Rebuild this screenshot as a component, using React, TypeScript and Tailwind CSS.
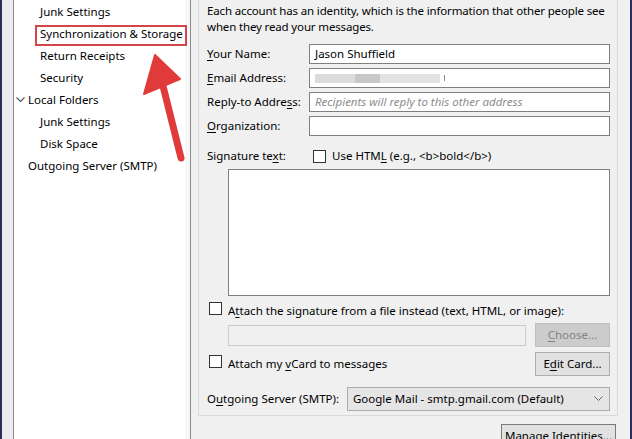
import React from "react";

const U = ({ children }: { children: React.ReactNode }) => (
  <span className="underline underline-offset-2">{children}</span>
);

const Checkbox = () => (
  <span className="inline-block w-[13px] h-[13px] border border-[#333333] bg-white shrink-0" />
);

function SideItem({ children, indent, chevron }: { children: React.ReactNode; indent?: boolean; chevron?: boolean }) {
  return (
    <div className={`relative h-[22px] flex items-center whitespace-nowrap ${indent ? "pl-[26px]" : "pl-[14px]"}`}>
      {chevron && (
        <svg width="9" height="6" viewBox="0 0 9 6" className="-ml-[12px] mr-[3px]">
          <path d="M0.5 0.5 L4.5 4.5 L8.5 0.5" fill="none" stroke="#555" strokeWidth="1.1" />
        </svg>
      )}
      <span>{children}</span>
    </div>
  );
}

export default function App() {
  return (
    <div
      className="w-[632px] h-[439px] overflow-hidden flex bg-[#f0f0f0] text-[11.5px] text-black relative"
      style={{ fontFamily: '"Noto Sans", "Open Sans", sans-serif' }}
    >
      <div className="w-[2px] shrink-0 bg-[#2b2f5e]" />
      <div className="w-[11px] shrink-0 bg-[#ececef]" />
      {/* Sidebar */}
      <div className="w-[178px] shrink-0 bg-white border-l border-r border-[#8a8a8a] pt-[1px] leading-none relative">
        <div className="absolute right-0 top-0 bottom-0 w-[5px] bg-[#f7f7f7]" />
        <SideItem indent>Junk Settings</SideItem>
        <div className="relative">
          <SideItem indent>Synchronization &amp; Storage</SideItem>
          <div className="absolute left-[21px] top-[2px] w-[152px] h-[21px] border-2 border-[#d2464a]" />
        </div>
        <SideItem indent>Return Receipts</SideItem>
        <SideItem indent>Security</SideItem>
        <SideItem chevron>Local Folders</SideItem>
        <SideItem indent>Junk Settings</SideItem>
        <SideItem indent>Disk Space</SideItem>
        <SideItem>Outgoing Server (SMTP)</SideItem>
      </div>
      {/* Right panel */}
      <div className="flex-1 min-w-0 pl-[7px] pr-[12px] flex flex-col">
        <div className="border-x border-b border-[#d9d9d9] pl-[8px] pr-[7px] pt-[3px] pb-[4px]">
          <p className="leading-[16px] whitespace-nowrap tracking-[-0.15px]">
            Each account has an identity, which is the information that other people see
            <br />
            when they read your messages.
          </p>
          <div className="mt-[9px] flex flex-col gap-[4px]">
            {[
              [<><U>Y</U>our Name:</>, <span className="pl-[5px]">Jason Shuffield</span>],
              [<><U>E</U>mail Address:</>, (
                <span className="pl-[5px] flex items-center gap-0 h-full py-[5px]">
                  <span className="w-[40px] h-[9px] bg-[#dcdcdc]" />
                  <span className="w-[25px] h-[9px] bg-[#c8c8c8]" />
                  <span className="w-[60px] h-[9px] bg-[#e2e2e2]" />
                  <span className="w-[1px] h-[6px] ml-[4px] bg-[#888]" />
                </span>
              )],
              [<>Reply-to Addre<U>s</U>s:</>, <span className="pl-[5px] italic text-[#8c8c8c]">Recipients will reply to this other address</span>],
              [<><U>O</U>rganization:</>, null],
            ].map(([label, val], i) => (
              <div key={i} className="flex items-center h-[20px]">
                <div className="w-[102px] whitespace-nowrap">{label}</div>
                <div className="flex-1 h-[20px] border border-[#7f7f7f] bg-white flex items-center whitespace-nowrap overflow-hidden">
                  {val}
                </div>
              </div>
            ))}
          </div>
          <div className="mt-[13px] flex items-center h-[14px]">
            <div className="w-[106px]">Signature te<U>x</U>t:</div>
            <Checkbox />
            <span className="ml-[6px]">Use HTM<U>L</U> (e.g., &lt;b&gt;bold&lt;/b&gt;)</span>
          </div>
          <div className="ml-[21px] mt-[6px] h-[127px] border border-[#7f7f7f] bg-white" />
          <div className="mt-[7px] flex items-center h-[16px]">
            <span className="ml-[2px]"><Checkbox /></span>
            <span className="ml-[6px]">A<U>t</U>tach the signature from a file instead (text, HTML, or image):</span>
          </div>
          <div className="mt-[4px] flex items-center">
            <div className="ml-[21px] w-[298px] h-[21px] border border-[#cccccc] bg-[#f0f0f0]" />
            <div className="ml-auto w-[75px] h-[24px] border border-[#bfbfbf] bg-[#cccccc] text-[#838383] flex items-center justify-center">
              <span><U>C</U>hoose...</span>
            </div>
          </div>
          <div className="mt-[5px] flex items-center h-[24px]">
            <span className="ml-[2px]"><Checkbox /></span>
            <span className="ml-[6px]">Attach my <U>v</U>Card to messages</span>
            <div className="ml-auto w-[75px] h-[24px] border border-[#adadad] bg-[#e1e1e1] flex items-center justify-center">
              <span>E<U>d</U>it Card...</span>
            </div>
          </div>
          <div className="mt-[11px] flex items-center h-[24px]">
            <div className="w-[140px] whitespace-nowrap">O<U>u</U>tgoing Server (SMTP):</div>
            <div className="flex-1 h-[24px] border border-[#acacac] bg-[#e5e5e5] flex items-center pl-[5px] pr-[6px]">
              <span className="flex-1 whitespace-nowrap">Google Mail - smtp.gmail.com (Default)</span>
              <svg width="9" height="6" viewBox="0 0 9 6">
                <path d="M0.5 0.5 L4.5 4.5 L8.5 0.5" fill="none" stroke="#666" strokeWidth="1" />
              </svg>
            </div>
          </div>
        </div>
        <div className="mt-[8px] flex justify-end">
          <div className="mr-[2px] w-[115px] h-[24px] border border-[#7a7a7a] bg-[#e1e1e1] flex items-center justify-center">
            <span>Manage Identities...</span>
          </div>
        </div>
      </div>
      <div className="w-[2px] shrink-0 bg-[#2b2f5e]" />
      {/* Annotation arrow */}
      <svg className="absolute left-0 top-0 pointer-events-none" width="632" height="439">
        <path d="M163 86 L181 158" stroke="#e03a3a" strokeWidth="7" strokeLinecap="round" />
        <polygon points="155,55 144,94 180,79" fill="#e03a3a" stroke="#e03a3a" strokeWidth="2" strokeLinejoin="round" />
      </svg>
    </div>
  );
}
